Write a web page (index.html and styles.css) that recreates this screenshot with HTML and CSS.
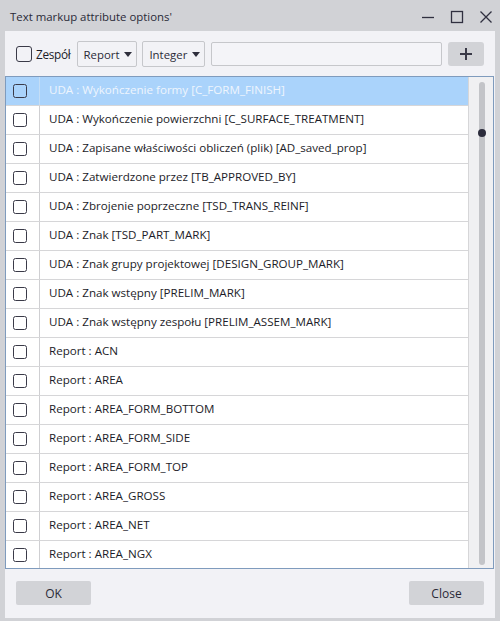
FILE: index.html
```html
<!DOCTYPE html>
<html>
<head>
<meta charset="utf-8">
<link rel="stylesheet" href="styles.css">
</head>
<body>
<div class="window">
  <div class="titlebar">
    <span class="title">Text markup attribute options'</span>
    <div class="controls">
      <svg class="ctl" width="16" height="16" viewBox="0 0 16 16"><path d="M2 8.5h12" stroke="#303040" stroke-width="1.3"/></svg>
      <svg class="ctl" width="16" height="16" viewBox="0 0 16 16"><rect x="2.5" y="2.5" width="11" height="11" fill="none" stroke="#303040" stroke-width="1.3"/></svg>
      <svg class="ctl" width="16" height="16" viewBox="0 0 16 16"><path d="M2.5 2.5l11 11M13.5 2.5l-11 11" stroke="#303040" stroke-width="1.3"/></svg>
    </div>
  </div>
  <div class="content">
    <div class="toolbar">
      <label class="team"><span class="cb cb-lg"></span><span>Zespół</span></label>
      <div class="dd dd-report"><span>Report</span><span class="tri"></span></div>
      <div class="dd dd-int"><span>Integer</span><span class="tri"></span></div>
      <div class="input"></div>
      <div class="plus"><svg width="14" height="14" viewBox="0 0 14 14"><path d="M7 1v12M1 7h12" stroke="#3a3a48" stroke-width="2"/></svg></div>
    </div>
    <div class="list">
      <div class="rows">
        <div class="row sel"><div class="cbcol"><span class="cb"></span></div><div class="txt">UDA : Wykończenie formy [C_FORM_FINISH]</div></div>
        <div class="row"><div class="cbcol"><span class="cb"></span></div><div class="txt">UDA : Wykończenie powierzchni [C_SURFACE_TREATMENT]</div></div>
        <div class="row"><div class="cbcol"><span class="cb"></span></div><div class="txt">UDA : Zapisane właściwości obliczeń (plik) [AD_saved_prop]</div></div>
        <div class="row"><div class="cbcol"><span class="cb"></span></div><div class="txt">UDA : Zatwierdzone przez [TB_APPROVED_BY]</div></div>
        <div class="row"><div class="cbcol"><span class="cb"></span></div><div class="txt">UDA : Zbrojenie poprzeczne [TSD_TRANS_REINF]</div></div>
        <div class="row"><div class="cbcol"><span class="cb"></span></div><div class="txt">UDA : Znak [TSD_PART_MARK]</div></div>
        <div class="row"><div class="cbcol"><span class="cb"></span></div><div class="txt">UDA : Znak grupy projektowej [DESIGN_GROUP_MARK]</div></div>
        <div class="row"><div class="cbcol"><span class="cb"></span></div><div class="txt">UDA : Znak wstępny [PRELIM_MARK]</div></div>
        <div class="row"><div class="cbcol"><span class="cb"></span></div><div class="txt">UDA : Znak wstępny zespołu [PRELIM_ASSEM_MARK]</div></div>
        <div class="row"><div class="cbcol"><span class="cb"></span></div><div class="txt">Report : ACN</div></div>
        <div class="row"><div class="cbcol"><span class="cb"></span></div><div class="txt">Report : AREA</div></div>
        <div class="row"><div class="cbcol"><span class="cb"></span></div><div class="txt">Report : AREA_FORM_BOTTOM</div></div>
        <div class="row"><div class="cbcol"><span class="cb"></span></div><div class="txt">Report : AREA_FORM_SIDE</div></div>
        <div class="row"><div class="cbcol"><span class="cb"></span></div><div class="txt">Report : AREA_FORM_TOP</div></div>
        <div class="row"><div class="cbcol"><span class="cb"></span></div><div class="txt">Report : AREA_GROSS</div></div>
        <div class="row"><div class="cbcol"><span class="cb"></span></div><div class="txt">Report : AREA_NET</div></div>
        <div class="row"><div class="cbcol"><span class="cb"></span></div><div class="txt">Report : AREA_NGX</div></div>
      </div>
      <div class="scroll">
        <div class="thumb"><span class="dot"></span></div>
      </div>
    </div>
    <div class="footer">
      <div class="btn">OK</div>
      <div class="btn">Close</div>
    </div>
  </div>
</div>
</body>
</html>
```

FILE: styles.css
```css
* { box-sizing: border-box; }
html, body { margin: 0; padding: 0; }
body {
  width: 500px;
  height: 621px;
  overflow: hidden;
  font-family: "Open Sans", "Noto Sans", sans-serif;
  font-size: 12px;
  color: #1c1c28;
}
.window {
  width: 500px;
  height: 621px;
  background: #d1d2d6;
  display: flex;
  flex-direction: column;
  padding: 0 5px 3px 5px;
}
.titlebar {
  height: 31px;
  flex: none;
  display: flex;
  align-items: center;
  justify-content: space-between;
}
.title {
  padding-left: 5px;
  font-size: 11.4px;
  color: #2a2a38;
  margin-top: 1px;
}
.controls {
  display: flex;
  gap: 13px;
  margin-right: 1px;
  margin-top: 2px;
}
.ctl { display: block; }
.content {
  flex: 1;
  background: #f2f2f6;
  display: flex;
  flex-direction: column;
}
.toolbar {
  display: flex;
  align-items: center;
  height: 26px;
  margin-top: 10px;
  padding: 0 11px;
}
.team {
  display: flex;
  align-items: center;
  gap: 4px;
  margin-right: 6px;
  font-size: 11.8px;
  letter-spacing: -0.3px;
}
.cb {
  display: block;
  width: 14px;
  height: 14px;
  border: 1.3px solid #3a3a48;
  border-radius: 2.5px;
  background: transparent;
}
.cb-lg { width: 16px; height: 16px; border-radius: 3px; }
.dd {
  height: 26px;
  border: 1px solid #c6c7cb;
  border-radius: 2px;
  display: flex;
  align-items: center;
  justify-content: space-between;
  padding: 0 4px 0 6px;
  font-size: 11.4px;
  color: #2a2a38;
  margin-right: 5px;
}
.dd-report { width: 61px; }
.dd-int { width: 63px; margin-right: 6px; }
.tri {
  width: 0; height: 0;
  border-left: 4.5px solid transparent;
  border-right: 4.5px solid transparent;
  border-top: 5.5px solid #2e2e3c;
  flex: none;
}
.input {
  width: 231px;
  height: 24px;
  border: 1px solid #c6c7cb;
  border-radius: 2px;
  background: #f4f4f8;
  margin-right: 6px;
}
.plus {
  width: 36px;
  height: 24px;
  background: #d2d3d7;
  border-radius: 3px;
  display: flex;
  align-items: center;
  justify-content: center;
}
.plus svg { display: block; }
.list {
  margin-top: 9px;
  margin-right: 1px;
  height: 493px;
  border: 1px solid #7f9bbd;
  background: #ffffff;
  display: flex;
  overflow: hidden;
}
.rows {
  flex: 1;
  overflow: hidden;
}
.row {
  height: 29px;
  display: flex;
  border-bottom: 1px solid #d6d6d8;
}
.cbcol {
  width: 34px;
  flex: none;
  border-right: 1px solid #cfcfd2;
  display: flex;
  align-items: center;
  padding-left: 7px;
}
.txt {
  padding-left: 9px;
  padding-bottom: 3px;
  display: flex;
  align-items: center;
  white-space: nowrap;
  font-size: 11.6px;
}
.row.sel { background: #aad3fb; }
.row.sel .txt { color: #eef5fd; }
.row.sel .cbcol { border-right-color: #c4ddf5; }
.scroll {
  width: 25px;
  flex: none;
  background: #f0f0f2;
  border-left: 1px solid #d6d6d8;
  display: flex;
  justify-content: center;
  padding-top: 5px;
  padding-bottom: 2px;
}
.thumb {
  width: 6px;
  height: 483px;
  border-radius: 3px;
  background: #c3c4c8;
  position: relative;
  margin-left: 1px;
}
.dot {
  position: absolute;
  left: -1px;
  top: 47px;
  width: 8px;
  height: 8px;
  border-radius: 50%;
  background: #2c2c3c;
}
.footer {
  display: flex;
  justify-content: space-between;
  padding: 12px 11px 0 11px;
}
.btn {
  width: 75px;
  height: 24px;
  background: #d2d3d7;
  border-radius: 2px;
  display: flex;
  align-items: center;
  justify-content: center;
  font-size: 12px;
  color: #2a2a38;
}
```
